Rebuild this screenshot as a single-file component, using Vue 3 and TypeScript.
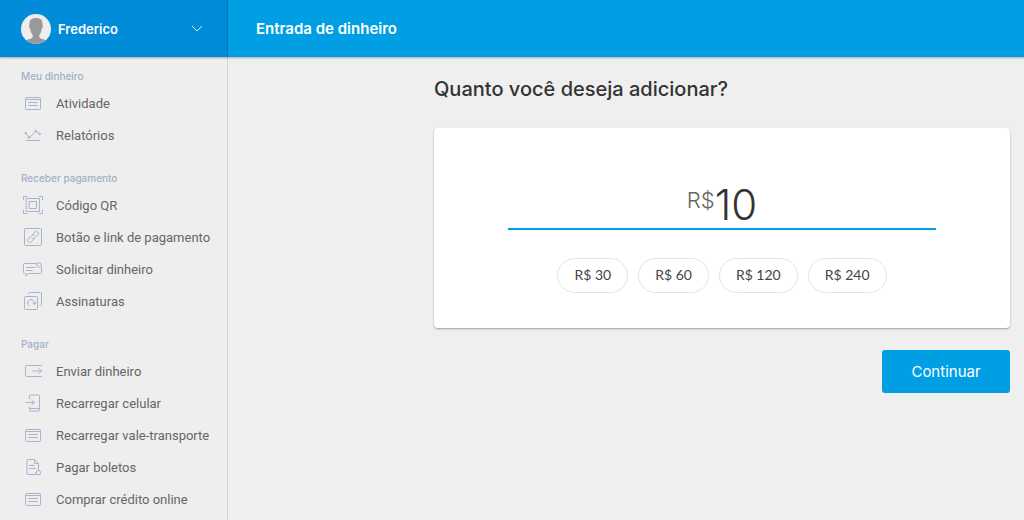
<script setup lang="ts">
import { ref } from 'vue'

type IconName = 'card' | 'chart' | 'qr' | 'link' | 'message' | 'repeat' | 'send' | 'phone' | 'bill'

interface MenuItem {
  label: string
  icon: IconName
}

interface MenuGroup {
  title: string
  items: MenuItem[]
}

const groups: MenuGroup[] = [
  {
    title: 'Meu dinheiro',
    items: [
      { label: 'Atividade', icon: 'card' },
      { label: 'Relatórios', icon: 'chart' },
    ],
  },
  {
    title: 'Receber pagamento',
    items: [
      { label: 'Código QR', icon: 'qr' },
      { label: 'Botão e link de pagamento', icon: 'link' },
      { label: 'Solicitar dinheiro', icon: 'message' },
      { label: 'Assinaturas', icon: 'repeat' },
    ],
  },
  {
    title: 'Pagar',
    items: [
      { label: 'Enviar dinheiro', icon: 'send' },
      { label: 'Recarregar celular', icon: 'phone' },
      { label: 'Recarregar vale-transporte', icon: 'card' },
      { label: 'Pagar boletos', icon: 'bill' },
      { label: 'Comprar crédito online', icon: 'card' },
    ],
  },
]

const icons: Record<IconName, string> = {
  card: 'M3.5 4.5h13a1 1 0 0 1 1 1v10a1 1 0 0 1-1 1h-13a1 1 0 0 1-1-1v-10a1 1 0 0 1 1-1zM2.5 6.5h15M5.5 9.5h9M5.5 12.5h9',
  chart:
    'M3.1 8.7l2.3 3.1M7 12l5.1-5M14 6.9l2 1.6M3 15.5h14M2 8a.8.8 0 1 0 1.6 0a.8.8 0 1 0-1.6 0M5.2 12.5a.9.9 0 1 0 1.8 0a.9.9 0 1 0-1.8 0M12.1 6.3a.9.9 0 1 0 1.8 0a.9.9 0 1 0-1.8 0M15.9 9a.8.8 0 1 0 1.6 0a.8.8 0 1 0-1.6 0',
  qr: 'M.5 5V1.5H4M16 1.5h3.5V5M19.5 15v3.5H16M4 18.5H.5V15M3.5 3.5h13v13h-13zM6.5 6.5h7v7h-7z',
  link: 'M2.5 1.5h15a1 1 0 0 1 1 1v15a1 1 0 0 1-1 1h-15a1 1 0 0 1-1-1v-15a1 1 0 0 1 1-1zM9 8l3-3a1.9 1.9 0 0 1 2.9 2.9l-3.5 3.5a1.9 1.9 0 0 1-2.7 0M11.1 11.9l-3 3a1.9 1.9 0 0 1-2.9-2.9l3.5-3.5a1.9 1.9 0 0 1 2.7 0',
  message:
    'M13.5 4.5H1.5a1 1 0 0 0-1 1v8a1 1 0 0 0 1 1H3V17l3-2.5h11.5a1 1 0 0 0 1-1V8.5M3.5 8.5H12M3.5 11.5H9M13.8 6a2.3 2.3 0 1 0 4.6 0a2.3 2.3 0 1 0-4.6 0',
  repeat:
    'M2.5 5.5h11a1 1 0 0 1 1 1v11a1 1 0 0 1-1 1h-11a1 1 0 0 1-1-1v-11a1 1 0 0 1 1-1zM5.5 3V2.5a1 1 0 0 1 1-1h11a1 1 0 0 1 1 1v11a1 1 0 0 1-1 1H17M6.3 15A3.5 3.5 0 1 1 11.6 12.5M9.6 12l1.9 1.5L13 11.6',
  send: 'M18.5 4.5h-15a1 1 0 0 0-1 1v9a1 1 0 0 0 1 1h15M9.5 10h9M15.5 7.3l3 2.7-3 2.7',
  phone:
    'M6.5 5.5V3a1 1 0 0 1 1-1h8a1 1 0 0 1 1 1v14a1 1 0 0 1-1 1h-8a1 1 0 0 1-1-1v-3M6.5 15.5h10M3 9.5h8M8.5 6.8l2.7 2.7-2.7 2.7',
  bill: 'M13 17.5H5a1 1 0 0 1-1-1v-13a1 1 0 0 1 1-1h6.5l4 4V13M11.5 2.5v4h4M6.5 8.5h5M6.5 11.5h6M13 15.7a2.3 2.3 0 1 0 4.6 0a2.3 2.3 0 1 0-4.6 0',
}

const amount = ref('10')
const presets: string[] = ['30', '60', '120', '240']
</script>

<template>
  <div class="page">
    <aside class="sidebar">
      <button class="account" type="button">
        <svg class="avatar" viewBox="0 0 30 30" aria-hidden="true">
          <defs>
            <clipPath id="avatar-clip"><circle cx="15" cy="15" r="15" /></clipPath>
          </defs>
          <circle cx="15" cy="15" r="15" fill="#eee" />
          <path
            clip-path="url(#avatar-clip)"
            fill="#999"
            d="M15 4c-4.500 0-6.800 2-6.500 6.500-.8 1.500-.2 3.500.7 4.500.3 2.500 1.300 4.500 2.500 6v2C10.500 25.500 6 25 3.500 27v3h23v-3c-2.500-2-7-1.500-8.200-4v-2c1.200-1.500 2.200-3.500 2.500-6 .9-1 1.500-3 .7-4.500C21.800 6 19.500 4 15 4z"
          />
        </svg>
        <span class="name">Frederico</span>
        <svg class="chevron" viewBox="0 0 12 8" aria-hidden="true">
          <path d="M1 1l5 5 5-5" />
        </svg>
      </button>
      <nav class="menu">
        <section v-for="group in groups" :key="group.title" class="group">
          <h2 class="group-title">{{ group.title }}</h2>
          <ul class="items">
            <li v-for="item in group.items" :key="item.label">
              <a class="item" href="#">
                <svg class="icon" viewBox="0 0 20 20" aria-hidden="true">
                  <path :d="icons[item.icon]" />
                </svg>
                <span>{{ item.label }}</span>
              </a>
            </li>
          </ul>
        </section>
      </nav>
    </aside>

    <div class="content">
      <header class="topbar">
        <h1 class="title">Entrada de dinheiro</h1>
      </header>
      <main class="main">
        <form class="form" @submit.prevent>
          <label class="question" for="amount">Quanto você deseja adicionar?</label>
          <div class="card">
            <div class="amount">
              <span class="currency">R$</span>
              <input id="amount" v-model="amount" class="value" type="text" inputmode="numeric" autocomplete="off" />
            </div>
            <div class="presets">
              <button v-for="preset in presets" :key="preset" class="preset" type="button" @click="amount = preset">
                R$ {{ preset }}
              </button>
            </div>
          </div>
          <button class="submit" type="submit">Continuar</button>
        </form>
      </main>
    </div>
  </div>
</template>

<style>
body {
  margin: 0;
  background: #efefef;
}
</style>

<style scoped>
.page {
  display: flex;
  height: 100vh;
  overflow: hidden;
  background: #efefef;
  color: #333;
  font-family: Inter, 'Open Sans', sans-serif;
}

button,
input {
  font-family: inherit;
}

.sidebar {
  flex: 0 0 228px;
  box-sizing: border-box;
  min-width: 0;
  border-right: 1px solid #d2d2d2;
  background: #eee;
}

.account {
  display: flex;
  align-items: center;
  box-sizing: border-box;
  width: 228px;
  height: 57px;
  padding: 0 24px 0 21px;
  border: 0;
  border-right: 1px solid #0083cb;
  background: #008cd8;
  box-shadow: 0 1px 2px rgba(0, 0, 0, 0.3);
  color: #fff;
  cursor: pointer;
}

.avatar {
  width: 30px;
  height: 30px;
}

.name {
  margin-left: 7px;
  font-size: 13px;
  font-weight: 600;
}

.chevron {
  width: 12px;
  height: 8px;
  margin-left: auto;
  fill: none;
  stroke: #d4ecfa;
}

.menu {
  padding-top: 8px;
}

.group {
  margin-bottom: 16px;
}

.group-title {
  margin: 0;
  padding-left: 21px;
  color: #a3aec6;
  font-size: 10px;
  font-weight: 500;
  line-height: 22px;
}

.items {
  margin: 0;
  padding: 0;
  list-style: none;
}

.item {
  display: flex;
  align-items: center;
  height: 32px;
  padding-left: 23px;
  color: #666;
  font-family: Roboto, 'Open Sans', sans-serif;
  font-size: 13px;
  text-decoration: none;
  white-space: nowrap;
}

.icon {
  width: 20px;
  height: 20px;
  margin-right: 13px;
  fill: none;
  stroke: #a8b4ca;
  stroke-linecap: round;
  stroke-linejoin: round;
}

.content {
  flex: 1;
  min-width: 0;
}

.topbar {
  display: flex;
  align-items: center;
  height: 57px;
  padding-left: 28px;
  background: #009ee3;
  box-shadow: 0 1px 2px rgba(0, 0, 0, 0.3);
}

.title {
  margin: 0;
  color: #fff;
  font-size: 15px;
  font-weight: 600;
}

.main {
  padding: 18px 14px 0;
}

.form {
  display: flex;
  flex-direction: column;
  max-width: 576px;
  margin-left: auto;
}

.question {
  font-size: 20px;
  font-weight: 500;
  line-height: 28px;
}

.card {
  display: flex;
  flex-direction: column;
  align-items: center;
  margin-top: 25px;
  padding: 54px 74px 35px;
  border-radius: 4px;
  background: #fff;
  box-shadow: 0 1px 2px rgba(0, 0, 0, 0.35);
}

.amount {
  display: flex;
  align-items: flex-start;
  justify-content: center;
  align-self: stretch;
  height: 46px;
  border-bottom: 2px solid #009ee3;
}

.currency {
  color: #666;
  font-size: 22px;
  font-weight: 300;
  line-height: 36px;
}

.value {
  field-sizing: content;
  height: 46px;
  padding: 0;
  border: 0;
  outline: 0;
  background: none;
  color: #333;
  font-size: 42px;
  font-weight: 300;
  line-height: 46px;
}

.presets {
  display: flex;
  gap: 10px;
  margin-top: 28px;
}

.preset {
  height: 35px;
  padding: 0 16px 2px;
  border: 1px solid #e4e4e4;
  border-radius: 18px;
  background: #fff;
  color: #444;
  font-family: Lato, 'Open Sans', sans-serif;
  font-size: 14px;
  cursor: pointer;
}

.submit {
  align-self: flex-end;
  width: 128px;
  height: 43px;
  margin-top: 22px;
  padding: 0;
  border: 0;
  border-radius: 3px;
  background: #009ee3;
  color: #fff;
  font-size: 15px;
  cursor: pointer;
}
</style>
